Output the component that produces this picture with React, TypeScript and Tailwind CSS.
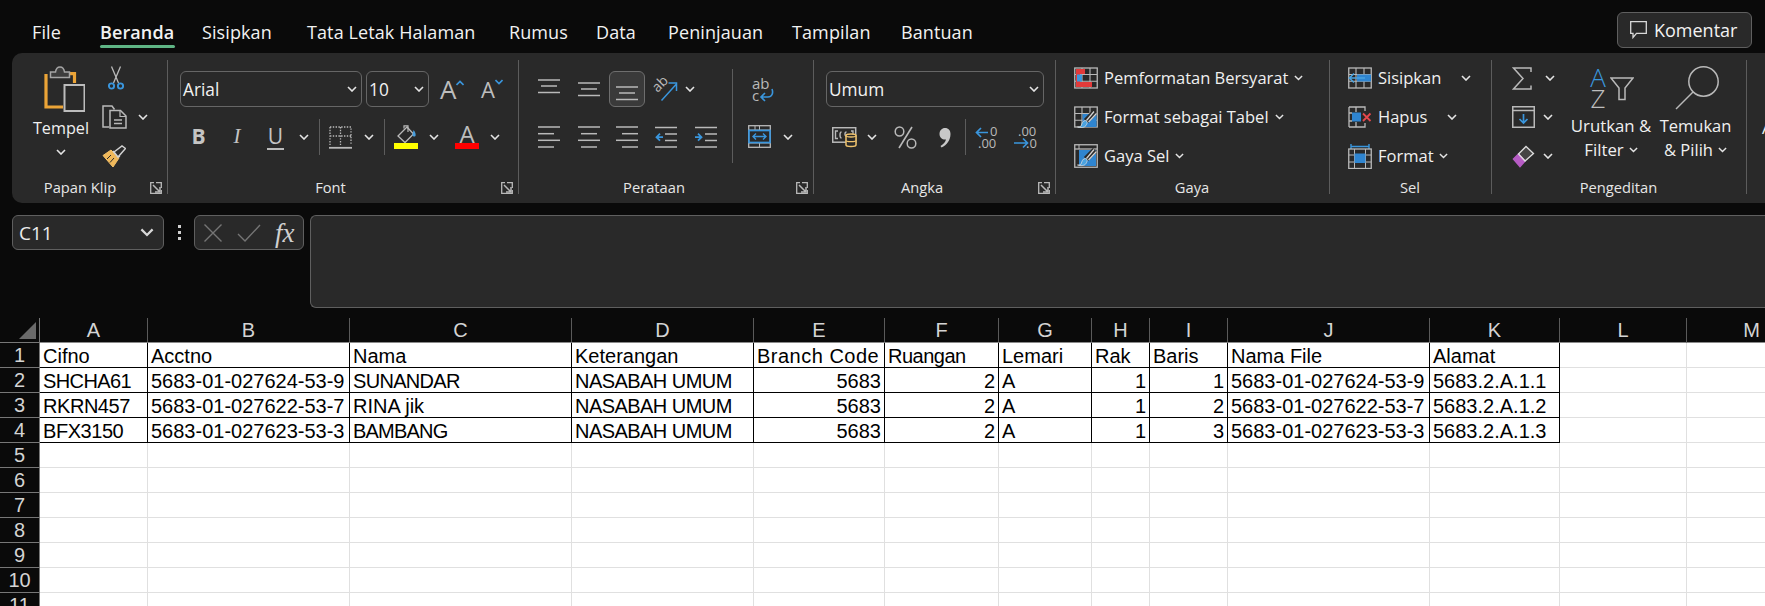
import React from "react";

const G = "#b9b9b9";
const B = "#3a96dd";

function Chev({ c = "#e4e4e4", w = 10 }: { c?: string; w?: number }) {
  return (
    <svg width={w} height={w * 0.6} viewBox="0 0 10 6" fill="none">
      <path d="M1 1l4 4 4-4" stroke={c} strokeWidth="1.6" />
    </svg>
  );
}

function Lines({ ys, spans, w = 22, h = 22 }: { ys: number[]; spans: [number, number][]; w?: number; h?: number }) {
  return (
    <svg width={w} height={h} viewBox={`0 0 ${w} ${h}`} fill="none">
      {ys.map((y, i) => (
        <path key={i} d={`M${spans[i][0]} ${y}H${spans[i][1]}`} stroke={G} strokeWidth="1.5" />
      ))}
    </svg>
  );
}

function IndentIcon({ out }: { out: boolean }) {
  return (
    <svg width="22" height="22" viewBox="0 0 22 22" fill="none">
      <path d="M0 1.5H22M10 8H22M10 14.5H22M0 21H22" stroke={G} strokeWidth="1.5" />
      {out ? (
        <path d="M8 11.2H1.5M5 7.7l-3.5 3.5 3.5 3.5" stroke={B} strokeWidth="1.8" />
      ) : (
        <path d="M0 11.2H6.5M3 7.7l3.5 3.5L3 14.7" stroke={B} strokeWidth="1.8" />
      )}
    </svg>
  );
}

function Grid3({ children }: { children?: React.ReactNode }) {
  return (
    <svg width="24" height="22" viewBox="0 0 24 22" fill="none">
      <rect x="0.75" y="1" width="22.5" height="20" stroke={G} strokeWidth="1.3" />
      <path d="M8 1V21M16 1V21M1 7.5H23M1 14.2H23" stroke={G} strokeWidth="1.1" />
      {children}
    </svg>
  );
}

const Brush = () => (
  <>
    <path d="M21 6 L12 15" stroke="#2a2a2a" strokeWidth="6" />
    <path d="M20 5.5 L12.5 14.5 M22.5 7.5 L14.5 16" stroke="#d2d2d2" strokeWidth="1.3" />
    <path d="M11.5 14.5c-3 0-3.5 3-4.5 5.5-.3.8-2 1-3.5 1 3 1 7 1 8.5-1.5 1-1.5 1.5-3 1-4z" fill="#4aa3e0" stroke="#d9d9d9" strokeWidth="0.8" />
  </>
);

function Paste() {
  return (
    <svg width="41" height="46" viewBox="0 0 41 46" fill="none">
      <path d="M2 8V41H19" stroke="#eba437" strokeWidth="3.2" />
      <path d="M25 7.6H30.5V17" stroke="#eba437" strokeWidth="3.2" />
      <path d="M6.5 11.5V6H11.5C12 2.5 14 1 16 1C18.5 1 20 2.5 20.5 6H25.5V11.5Z" fill="#3d3d3d" stroke="#a5a5a5" strokeWidth="1.5" />
      <rect x="20.5" y="19" width="20" height="26" fill="#292929" stroke="#bcbcbc" strokeWidth="2" />
    </svg>
  );
}

function Scissors() {
  return (
    <svg width="16" height="24" viewBox="0 0 16 24" fill="none">
      <path d="M3.5 0.5L10.5 17M12.5 0.5L5.5 17" stroke={G} strokeWidth="1.3" />
      <circle cx="3.5" cy="20" r="2.6" stroke={B} strokeWidth="1.9" />
      <circle cx="12.5" cy="20" r="2.6" stroke={B} strokeWidth="1.9" />
    </svg>
  );
}

function Copy() {
  return (
    <svg width="25" height="24" viewBox="0 0 25 24" fill="none">
      <path d="M7 22H1V1H10L12.5 4.5" stroke={G} strokeWidth="1.5" />
      <path d="M8 5.5H18.5L24 11V23H8Z" fill="#292929" stroke={G} strokeWidth="1.5" />
      <path d="M18 5.5V11.5H24" stroke={G} strokeWidth="1.2" />
      <path d="M12 15H20M12 18.5H20" stroke={G} strokeWidth="1.5" />
    </svg>
  );
}

function FormatBrush() {
  return (
    <svg width="24" height="23" viewBox="0 0 24 23" fill="none">
      <path d="M1 10.5L9 5L17 13L11 22Z" fill="#f0b85a" stroke="#f3c067" strokeWidth="1" />
      <path d="M5 14L9 10M8 17.5L12 13" stroke="#292929" strokeWidth="1" />
      <path d="M11 6L14 9.5M14 9.5L18 12" stroke="#d5d5d5" strokeWidth="1.3" />
      <path d="M12 7L20 1L23.5 3.5L16 12Z" fill="#292929" stroke="#d0d0d0" strokeWidth="1.5" />
    </svg>
  );
}

function BorderIcon() {
  return (
    <svg width="23" height="23" viewBox="0 0 23 23" fill="none">
      <path d="M1 1H22V19M1 1V19M11.5 1V19M1 10H22" stroke={G} strokeWidth="1.3" strokeDasharray="1.4 1.4" />
      <path d="M0 21.8H23" stroke={G} strokeWidth="1.8" />
    </svg>
  );
}

function FillIcon() {
  return (
    <svg width="24" height="24" viewBox="0 0 24 24" fill="none">
      <path d="M13 2L4 11L11 17.5L19.5 9Z" stroke={G} strokeWidth="1.3" />
      <path d="M10 3.5V0.8H14V7" stroke={G} strokeWidth="1.2" />
      <path d="M19.5 5C21 6.5 22 8.5 21.5 11C20.5 12 19 11.5 18.5 10.5Z" fill="#4a9fdd" />
      <rect y="18" width="24" height="6" fill="#ffff00" />
    </svg>
  );
}

function FontColor() {
  return (
    <div className="w-[24px] h-[24px] flex flex-col items-center">
      <span className="h-[18px] leading-[18px] text-[24px] text-[#bdbdbd]">A</span>
      <span className="w-[24px] h-[6px] bg-[#ff0000]" />
    </div>
  );
}

function Orientation() {
  return (
    <svg width="24" height="23" viewBox="0 0 24 23" fill="none" overflow="visible">
      <text x="0" y="0" transform="translate(4.5 15) rotate(-45)" fontFamily="'Open Sans',sans-serif" fontSize="14" fill={G}>ab</text>
      <path d="M8.5 22.5L23 6.5M15.5 5H23.5V13" stroke={B} strokeWidth="1.5" />
    </svg>
  );
}

function Wrap() {
  return (
    <svg width="22" height="24" viewBox="0 0 22 24" fill="none" overflow="visible">
      <text x="0" y="11" fontFamily="'Open Sans',sans-serif" fontSize="15" fill={G}>ab</text>
      <text x="0" y="23" fontFamily="'Open Sans',sans-serif" fontSize="15" fill={G}>c</text>
      <path d="M20 11C21.5 15 20 19 16 19H9M13 15L9 19L13 23" stroke={B} strokeWidth="1.6" />
    </svg>
  );
}

function Merge() {
  return (
    <svg width="23" height="23" viewBox="0 0 23 23" fill="none">
      <rect x="0.7" y="0.7" width="21.6" height="21.6" stroke={G} strokeWidth="1.3" />
      <path d="M11.5 1V6.5M11.5 17V22M7 1V5M1 5H22M1 18H22" stroke={G} strokeWidth="1" />
      <rect x="1" y="5.5" width="21" height="12" stroke={B} strokeWidth="1.7" fill="#292929" />
      <path d="M5 11.5H18M8 8.5L5 11.5L8 14.5M15 8.5L18 11.5L15 14.5" stroke={B} strokeWidth="1.4" />
    </svg>
  );
}

function Accounting() {
  return (
    <svg width="25" height="21" viewBox="0 0 25 21" fill="none">
      <rect x="0.7" y="0.7" width="23" height="14.5" stroke={G} strokeWidth="1.5" />
      <path d="M6 4H3.5V11.5H6M19 4H21V7M9.5 5C7.5 5 7.5 11 9.5 11M14.5 5C12.5 5 12.5 9 14.5 9" stroke={G} strokeWidth="1.4" />
      <path d="M14 8.5C14 6.5 24 6.5 24 8.5V18C24 20 14 20 14 18Z" fill="#292929" stroke="#f0c36d" strokeWidth="1.5" />
      <path d="M14 8.5C14 10.5 24 10.5 24 8.5M14 13.5C14 15 24 15 24 13.5" stroke="#f0c36d" strokeWidth="1.3" />
    </svg>
  );
}

function Percent() {
  return (
    <svg width="23" height="23" viewBox="0 0 23 23" fill="none">
      <path d="M18 1L5 22" stroke={G} strokeWidth="1.6" />
      <ellipse cx="5.5" cy="5.5" rx="4.3" ry="4.5" stroke={G} strokeWidth="1.5" />
      <ellipse cx="17.5" cy="17.5" rx="4.3" ry="4.5" stroke={G} strokeWidth="1.5" />
    </svg>
  );
}

function Comma() {
  return (
    <svg width="12" height="21" viewBox="0 0 12 21" fill="none">
      <path d="M6 1C9.5 1 11.5 3.5 11.5 7C11.5 13 8 18 2.5 20.5L1.5 19C4.5 17 6.5 15 7 12.5C3.5 13 0.5 10.5 0.5 7C0.5 3.5 3 1 6 1Z" fill="#c8c8c8" />
    </svg>
  );
}

function DecUp() {
  return (
    <svg width="23" height="23" viewBox="0 0 23 23" fill="none" overflow="visible">
      <path d="M13 6.5H1.5M6 2L1.5 6.5L6 11" stroke={B} strokeWidth="1.7" />
      <text x="15" y="10" fontFamily="'Open Sans',sans-serif" fontSize="13" fill={G}>0</text>
      <text x="3" y="22" fontFamily="'Open Sans',sans-serif" fontSize="13" fill={G}>.00</text>
    </svg>
  );
}

function DecDown() {
  return (
    <svg width="24" height="23" viewBox="0 0 24 23" fill="none" overflow="visible">
      <text x="4" y="10" fontFamily="'Open Sans',sans-serif" fontSize="13" fill={G}>.00</text>
      <path d="M0 17H13M9 12.5L13.5 17L9 21.5" stroke={B} strokeWidth="1.7" />
      <text x="12" y="22" fontFamily="'Open Sans',sans-serif" fontSize="13" fill={G}>.0</text>
    </svg>
  );
}

function SortAZ() {
  return (
    <div className="flex items-start w-[44px] h-[42px]">
      <div className="w-[17px] flex flex-col items-center font-light">
        <span className="h-[21px] leading-[21px] text-[26px] text-[#3a96dd]">A</span>
        <span className="h-[21px] leading-[21px] text-[26px] text-[#bdbdbd]">Z</span>
      </div>
      <svg className="ml-[3px] mt-[10px]" width="24" height="24" viewBox="0 0 24 24" fill="none">
        <path d="M1 1H23L15 11V22.5H9V11Z" stroke={G} strokeWidth="1.5" />
      </svg>
    </div>
  );
}

function Magnifier() {
  return (
    <svg width="44" height="44" viewBox="0 0 44 44" fill="none">
      <circle cx="28.5" cy="15.5" r="14.7" stroke={G} strokeWidth="1.5" />
      <path d="M18 26L1 43" stroke={G} strokeWidth="1.5" />
    </svg>
  );
}

function Launcher() {
  return (
    <svg width="12" height="12" viewBox="0 0 12 12" fill="none">
      <path d="M4 0.7H0.7V11.3H11.3V8" stroke={G} strokeWidth="1.3" />
      <path d="M3 3L10 10M5 10H10V5" stroke={G} strokeWidth="1.5" />
      <path d="M6 0.7H11.3V6" stroke={G} strokeWidth="1.3" />
    </svg>
  );
}

function Sep({ className }: { className: string }) {
  return <div className={`w-[1px] bg-[#5c5c5c] ${className}`} />;
}

function AlignLines({ kind }: { kind: "l" | "c" | "r" }) {
  const spans: Record<string, [number, number][]> = {
    l: [[0, 22], [0, 16], [0, 22], [0, 16]],
    c: [[0, 22], [3, 19], [0, 22], [3, 19]],
    r: [[0, 22], [6, 22], [0, 22], [6, 22]],
  };
  return <Lines ys={[1, 7.7, 14.3, 21]} spans={spans[kind]} />;
}

const tabs: [string, string][] = [
  ["File", "w-[68px]"],
  ["Beranda", "w-[102px]"],
  ["Sisipkan", "w-[105px]"],
  ["Tata Letak Halaman", "w-[202px]"],
  ["Rumus", "w-[87px]"],
  ["Data", "w-[72px]"],
  ["Peninjauan", "w-[124px]"],
  ["Tampilan", "w-[109px]"],
  ["Bantuan", "w-[90px]"],
];

const cols = ["A", "B", "C", "D", "E", "F", "G", "H", "I", "J", "K", "L", "M"];
const rows: string[][] = [
  ["Cifno", "Acctno", "Nama", "Keterangan", "Branch Code", "Ruangan", "Lemari", "Rak", "Baris", "Nama File", "Alamat"],
  ["SHCHA61", "5683-01-027624-53-9", "SUNANDAR", "NASABAH UMUM", "5683", "2", "A", "1", "1", "5683-01-027624-53-9", "5683.2.A.1.1"],
  ["RKRN457", "5683-01-027622-53-7", "RINA jik", "NASABAH UMUM", "5683", "2", "A", "1", "2", "5683-01-027622-53-7", "5683.2.A.1.2"],
  ["BFX3150", "5683-01-027623-53-3", "BAMBANG", "NASABAH UMUM", "5683", "2", "A", "1", "3", "5683-01-027623-53-3", "5683.2.A.1.3"],
];

const tracking: Record<string, string> = {
  SHCHA61: "tracking-[-0.6px]",
  RKRN457: "tracking-[-0.45px]",
  BFX3150: "tracking-[-0.45px]",
  SUNANDAR: "tracking-[-0.7px]",
  BAMBANG: "tracking-[-0.8px]",
  "NASABAH UMUM": "tracking-[-0.55px]",
  "Branch Code": "tracking-[0.5px]",
  Ruangan: "tracking-[-0.5px]",
};

function Sheet() {
  const cellFont = "font-['Liberation_Sans',Arial,sans-serif] text-[20px] leading-[24px]";
  return (
    <div className="grid grid-cols-[40px_108px_202px_222px_182px_131px_114px_93px_58px_78px_202px_130px_127px_130px] w-max">
      <div className="h-[25px] border-r border-b border-[#777777] flex justify-end items-end pr-[3px] pb-[3px]">
        <div className="w-0 h-0 border-l-[17px] border-l-transparent border-b-[17px] border-b-[#6a6a6a]" />
      </div>
      {cols.map((c) => (
        <div key={c} className={`h-[25px] border-r border-b border-r-[#5a5a5a] border-b-[#8a8a8a] flex items-center justify-center text-[#d4d4d4] ${cellFont}`}>
          {c}
        </div>
      ))}
      {Array.from({ length: 11 }).map((_, r) => (
        <React.Fragment key={r}>
          <div className={`h-[25px] border-r border-b border-[#777777] flex items-center justify-center text-[#d4d4d4] ${cellFont}`}>{r + 1}</div>
          {cols.map((c, i) => {
            const inData = r < 4 && i < 11;
            const v = r < 4 && i < 11 ? rows[r][i] : "";
            const right = r > 0 && (i === 4 || i === 5 || i === 7 || i === 8);
            return (
              <div
                key={c}
                className={`h-[25px] bg-white border-r border-b flex items-center overflow-visible whitespace-nowrap text-black px-[3px] pt-[1px] ${cellFont} ${tracking[v] ?? ""} ${inData ? "border-black" : "border-[#e0e0e0]"} ${right ? "justify-end" : "justify-start"}`}
              >
                {v}
              </div>
            );
          })}
        </React.Fragment>
      ))}
    </div>
  );
}

function GroupLabel({ text, w, launcher }: { text: string; w: string; launcher?: string }) {
  return (
    <div className="h-[12px] flex items-center text-[14.7px] text-[#e6e6e6]">
      <span className={`${w} text-center leading-[12px] -mt-[2px]`}>{text}</span>
      {launcher ? (
        <span className={`${launcher} flex`}>
          <Launcher />
        </span>
      ) : null}
    </div>
  );
}

const selectBox = "h-[36px] rounded-[6px] border border-[#666666] bg-[#292929] flex items-center justify-between text-[17.3px] text-[#f2f2f2] pl-[2px] pr-[4px]";

function Ribbon() {
  const grp = "shrink-0 h-[134px] my-[7px] border-r border-[#5c5c5c] flex flex-col";
  const body = "h-[122px]";
  const rowS = "h-[36px] flex items-center";
  return (
    <div className="ml-[12px] h-[150px] bg-[#292929] rounded-l-[10px] flex text-[#f0f0f0]">
      <div className={`${grp} w-[156px]`}>
        <div className={`${body} flex`}>
          <div className="w-[88px] flex flex-col items-center pl-[10px]">
            <div className="mt-[6px] flex ml-[6px]"><Paste /></div>
            <div className="mt-[4px] text-[16.2px] leading-[24px]">Tempel</div>
            <div className="mt-[9px] flex"><Chev /></div>
          </div>
          <div className="flex flex-col pl-[2px]">
            <div className={`${rowS} pl-[6px]`}><Scissors /></div>
            <div className={`${rowS} mt-[3px]`}>
              <Copy />
              <span className="ml-[11px] flex"><Chev /></span>
            </div>
            <div className={`${rowS} mt-[3px]`}><FormatBrush /></div>
          </div>
        </div>
        <GroupLabel text="Papan Klip" w="w-[136px]" launcher="ml-[2px]" />
      </div>

      <div className={`${grp} w-[351px]`}>
        <div className={body}>
          <div className="flex mt-[11px] ml-[12px] items-center">
            <div className={`${selectBox} w-[182px]`}><span className="pt-[1px]">Arial</span><Chev /></div>
            <div className={`${selectBox} w-[63px] ml-[4px]`}><span className="pt-[1px]">10</span><Chev /></div>
            <div className="ml-[11px] w-[24px] flex items-start h-[36px]">
              <span className="text-[26px] leading-[36px] text-[#bdbdbd]">A</span>
              <span className="mt-[9px] flex"><svg width="8" height="6" viewBox="0 0 8 6" fill="none"><path d="M0.5 5L4 1.5L7.5 5" stroke={B} strokeWidth="1.6" /></svg></span>
            </div>
            <div className="ml-[17px] w-[22px] flex items-start h-[36px]">
              <span className="text-[22px] leading-[36px] text-[#bdbdbd]">A</span>
              <span className="mt-[8px] flex"><svg width="8" height="6" viewBox="0 0 8 6" fill="none"><path d="M0.5 1L4 4.5L7.5 1" stroke={B} strokeWidth="1.6" /></svg></span>
            </div>
          </div>
          <div className="flex mt-[12px] ml-[11px] items-center h-[36px]">
            <div className="w-[39px] flex justify-center text-[21px] font-bold text-[#c4c4c4]">B</div>
            <div className="w-[38px] flex justify-center text-[21px] italic text-[#c4c4c4] font-['Liberation_Serif',serif]">I</div>
            <div className="w-[39px] flex justify-center"><span className="text-[21px] leading-[23px] text-[#c4c4c4] border-b-2 border-[#bbbbbb] px-[1px]">U</span></div>
            <div className="w-[18px] flex justify-center"><Chev /></div>
            <Sep className="ml-[6px] h-[36px]" />
            <div className="w-[40px] flex justify-center"><BorderIcon /></div>
            <div className="w-[18px] flex justify-center"><Chev /></div>
            <Sep className="ml-[6px] h-[36px]" />
            <div className="w-[42px] flex justify-center"><FillIcon /></div>
            <div className="w-[14px] flex justify-center"><Chev /></div>
            <div className="ml-[14px] w-[24px]"><FontColor /></div>
            <div className="ml-[8px] w-[16px] flex justify-center"><Chev /></div>
          </div>
        </div>
        <GroupLabel text="Font" w="w-[325px]" launcher="ml-[8px]" />
      </div>

      <div className={`${grp} w-[295px]`}>
        <div className={`${body} flex`}>
          <div className="w-[213px] shrink-0">
            <div className="flex mt-[11px] ml-[10px] h-[36px] items-center">
              <div className="w-[40px] flex justify-center -mt-[5px]"><Lines ys={[1, 7, 13.5]} spans={[[0, 22], [3, 19], [0, 22]]} h={15} /></div>
              <div className="w-[39px] flex justify-center"><Lines ys={[1, 7, 13.5]} spans={[[0, 22], [3, 19], [0, 22]]} h={15} /></div>
              <div className="ml-[1px] w-[36px] h-[36px] flex items-end justify-center pb-[5px] rounded-[6px] border border-[#6e6e6e] bg-[#3a3a3a]">
                <Lines ys={[1, 7, 13.5]} spans={[[0, 22], [3, 19], [0, 22]]} h={15} />
              </div>
              <div className="ml-[8px] w-[24px] flex"><Orientation /></div>
              <div className="ml-[5px] w-[16px] flex justify-center"><Chev /></div>
            </div>
            <div className="flex mt-[12px] ml-[10px] h-[36px] items-center">
              <div className="w-[40px] flex justify-center"><AlignLines kind="l" /></div>
              <div className="w-[39px] flex justify-center"><AlignLines kind="c" /></div>
              <div className="w-[38px] flex justify-center"><AlignLines kind="r" /></div>
              <div className="w-[40px] flex justify-center"><IndentIcon out /></div>
              <div className="w-[39px] flex justify-center"><IndentIcon out={false} /></div>
            </div>
          </div>
          <Sep className="mt-[9px] h-[94px]" />
          <div className="pl-[15px] flex flex-col">
            <div className="mt-[18px] ml-[4px] flex h-[24px]"><Wrap /></div>
            <div className="mt-[23px] flex items-center h-[23px]">
              <Merge />
              <span className="ml-[12px] flex"><Chev /></span>
            </div>
          </div>
        </div>
        <GroupLabel text="Perataan" w="w-[270px]" launcher="ml-[7px]" />
      </div>

      <div className={`${grp} w-[242px]`}>
        <div className={body}>
          <div className="mt-[11px] ml-[12px]">
            <div className={`${selectBox} w-[218px]`}><span className="pt-[1px]">Umum</span><Chev /></div>
          </div>
          <div className="flex mt-[12px] h-[36px] items-center">
            <div className="ml-[18px] w-[25px] flex"><Accounting /></div>
            <div className="ml-[7px] w-[16px] flex justify-center"><Chev /></div>
            <div className="ml-[14px] w-[23px] flex"><Percent /></div>
            <div className="ml-[22px] w-[12px] flex"><Comma /></div>
            <Sep className="ml-[14px] h-[36px]" />
            <div className="ml-[9px] w-[23px] flex"><DecUp /></div>
            <div className="ml-[16px] w-[24px] flex"><DecDown /></div>
          </div>
        </div>
        <GroupLabel text="Angka" w="w-[216px]" launcher="ml-[8px]" />
      </div>

      <div className={`${grp} w-[274px]`}>
        <div className={`${body} flex flex-col gap-[3px] text-[16.5px] pl-[18px]`}>
          <div className={rowS}>
            <Grid3>
              <path d="M2 2H11V7H6V15H18V20H2Z" fill="#e23a3a" />
              <rect x="3" y="7.5" width="5" height="7" fill="#3a96dd" />
            </Grid3>
            <span className="ml-[6px]">Pemformatan Bersyarat</span>
            <span className="ml-[6px] flex"><Chev w={9} /></span>
          </div>
          <div className={rowS}>
            <Grid3>
              <rect x="8.5" y="8" width="14" height="13" fill="#2f85d0" />
              <Brush />
            </Grid3>
            <span className="ml-[6px]">Format sebagai Tabel</span>
            <span className="ml-[6px] flex"><Chev w={9} /></span>
          </div>
          <div className={rowS}>
            <svg width="24" height="24" viewBox="0 0 24 24" fill="none">
              <rect x="0.75" y="0.75" width="22.5" height="22.5" stroke={G} strokeWidth="1.3" />
              <path d="M1 5H23" stroke={G} strokeWidth="1.3" />
              <path d="M5 1V5" stroke={G} strokeWidth="1" />
              <rect x="5" y="6" width="17" height="16" fill="#2f85d0" />
              <Brush />
            </svg>
            <span className="ml-[6px]">Gaya Sel</span>
            <span className="ml-[6px] flex"><Chev w={9} /></span>
          </div>
        </div>
        <GroupLabel text="Gaya" w="w-[272px]" />
      </div>

      <div className={`${grp} w-[162px]`}>
        <div className={`${body} flex flex-col gap-[3px] text-[16.5px] pl-[18px]`}>
          <div className={rowS}>
            <Grid3>
              <rect x="9" y="7.5" width="14" height="7" fill="#2f85d0" />
              <path d="M17 11H1.5M6 6.5L1.5 11L6 15.5" stroke="#4aa3e0" strokeWidth="1.6" />
            </Grid3>
            <span className="ml-[6px] w-[83px]">Sisipkan</span>
            <span className="flex"><Chev /></span>
          </div>
          <div className={rowS}>
            <svg width="24" height="22" viewBox="0 0 24 22" fill="none">
              <path d="M1 1H17V5M1 21H17V17M1 1V21M8 1V6M8 16V21M1 7H4M1 15H4" stroke={G} strokeWidth="1.3" />
              <rect x="4" y="6.5" width="9" height="9" fill="#2f85d0" />
              <path d="M15 7.5L22.5 15M22.5 7.5L15 15" stroke="#e5484d" strokeWidth="1.8" />
            </svg>
            <span className="ml-[6px] w-[69px]">Hapus</span>
            <span className="flex"><Chev /></span>
          </div>
          <div className={rowS}>
            <svg width="24" height="25" viewBox="0 0 24 25" fill="none">
              <path d="M3 0V5M21 0V5M3 2.5H21" stroke="#3a96dd" strokeWidth="1.4" />
              <rect x="0.75" y="5" width="22.5" height="19.5" stroke={G} strokeWidth="1.3" />
              <path d="M6.5 5V24M17.5 5V24M1 11H23M1 18H23" stroke={G} strokeWidth="1" />
              <rect x="6.5" y="9.5" width="11" height="9.5" fill="#2f85d0" />
            </svg>
            <span className="ml-[6px]">Format</span>
            <span className="ml-[5px] flex"><Chev w={9} /></span>
          </div>
        </div>
        <GroupLabel text="Sel" w="w-[160px]" />
      </div>

      <div className={`${grp} w-[255px]`}>
        <div className={`${body} flex`}>
          <div className="w-[79px] shrink-0 flex flex-col gap-[3px] pl-[20px]">
            <div className={rowS}>
              <svg width="20" height="23" viewBox="0 0 20 23" fill="none">
                <path d="M19 5V1H1.5L11 11.5L1.5 22H19V18.5" stroke={G} strokeWidth="1.5" />
              </svg>
              <span className="ml-[13px] flex"><Chev /></span>
            </div>
            <div className={rowS}>
              <svg width="23" height="22" viewBox="0 0 23 22" fill="none">
                <rect x="0.75" y="0.75" width="21.5" height="20.5" stroke={G} strokeWidth="1.5" />
                <path d="M1 4.5H22" stroke={G} strokeWidth="1.5" />
                <path d="M11.5 8V17M7.5 13L11.5 17L15.5 13" stroke="#3a96dd" strokeWidth="1.7" />
              </svg>
              <span className="ml-[8px] flex"><Chev /></span>
            </div>
            <div className={rowS}>
              <svg width="23" height="23" viewBox="0 0 23 23" fill="none">
                <path d="M1.5 14L8 21.5L13 16L6.5 9Z" fill="#b65cc4" stroke="#b65cc4" strokeWidth="1.5" />
                <path d="M6.5 9L14 1.5L21.5 8.5L13 16Z" stroke="#dcdcdc" strokeWidth="1.3" fill="#e8e8e8" fillOpacity="0.15" />
              </svg>
              <span className="ml-[8px] flex"><Chev /></span>
            </div>
          </div>
          <div className="w-[80px] shrink-0 flex flex-col items-center text-[16.8px] leading-[24px]">
            <div className="mt-[7px] h-[47px] ml-[1px]"><SortAZ /></div>
            <div className="whitespace-nowrap">Urutkan &amp;</div>
            <div className="flex items-center gap-[5px]">Filter <Chev w={9} /></div>
          </div>
          <div className="ml-[10px] w-[69px] shrink-0 flex flex-col items-center text-[16.5px] leading-[24px]">
            <div className="mt-[6px] h-[48px] ml-[3px]"><Magnifier /></div>
            <div>Temukan</div>
            <div className="flex items-center gap-[5px] whitespace-nowrap">&amp; Pilih <Chev w={9} /></div>
          </div>
        </div>
        <GroupLabel text="Pengeditan" w="w-[253px]" />
      </div>

      <div className="shrink-0 pl-[15px] pt-[62px] text-[17px] leading-[25px] whitespace-nowrap">Analisis Data</div>
    </div>
  );
}

function FormulaBar() {
  return (
    <div className="flex pl-[12px] pt-[12px] pb-[10px] items-start">
      <div className="w-[152px] h-[35px] rounded-[6px] border border-[#5f5f5f] bg-[#292929] flex items-center justify-between pl-[6px] pr-[9px] text-[19px] text-[#ececec]">
        <span className="pt-[1px]">C11</span>
        <Chev w={14} c="#d8d8d8" />
      </div>
      <div className="w-[30px] h-[35px] flex flex-col items-center justify-center gap-[3px]">
        <span className="w-[3px] h-[3px] bg-[#d0d0d0]" />
        <span className="w-[3px] h-[3px] bg-[#d0d0d0]" />
        <span className="w-[3px] h-[3px] bg-[#d0d0d0]" />
      </div>
      <div className="w-[110px] h-[35px] rounded-[6px] border border-[#5f5f5f] bg-[#292929] flex items-center pl-[9px]">
        <svg width="18" height="18" viewBox="0 0 18 18" fill="none"><path d="M0.5 0.5L17.5 17.5M17.5 0.5L0.5 17.5" stroke="#757575" strokeWidth="1.4" /></svg>
        <svg className="ml-[15px]" width="24" height="18" viewBox="0 0 24 18" fill="none"><path d="M1 10L8 17L23 1" stroke="#757575" strokeWidth="1.4" /></svg>
        <span className="ml-[14px] font-['Liberation_Serif',serif] italic text-[27px] leading-[30px] text-[#d0d0d0]">fx</span>
      </div>
      <div className="ml-[6px] flex-1 h-[93px] rounded-l-[6px] border-t border-l border-b border-[#5f5f5f] bg-[#292929]" />
    </div>
  );
}

export default function App() {
  return (
    <div className="w-full h-[606px] overflow-hidden bg-[#0a0a0a] font-['Open_Sans',sans-serif]">
      <div className="flex justify-between h-[53px]">
        <div className="flex pl-[32px] pt-[20px] text-[18px] tracking-[0.1px] leading-[24px] text-[#f2f2f2]">
          {tabs.map(([t, w]) => (
            <div key={t} className={`${w} flex flex-col whitespace-nowrap ${t === "Beranda" ? "font-semibold" : ""}`}>
              <span>{t}</span>
              {t === "Beranda" ? <span className="mt-[1px] h-[3px] w-[75px] rounded-[2px] bg-[#5fb585]" /> : null}
            </div>
          ))}
        </div>
        <div className="mt-[12px] mr-[13px] w-[135px] h-[36px] rounded-[6px] border border-[#5f5f5f] bg-[#292929] flex items-center pl-[12px] gap-[7px] text-[18px] text-[#f2f2f2]">
          <svg width="17" height="18" viewBox="0 0 17 18" fill="none"><path d="M0.7 0.7H16.3V12.3H6.5L3 16.5V12.3H0.7Z" stroke="#d8d8d8" strokeWidth="1.3" /></svg>
          <span>Komentar</span>
        </div>
      </div>
      <Ribbon />
      <FormulaBar />
      <Sheet />
    </div>
  );
}
